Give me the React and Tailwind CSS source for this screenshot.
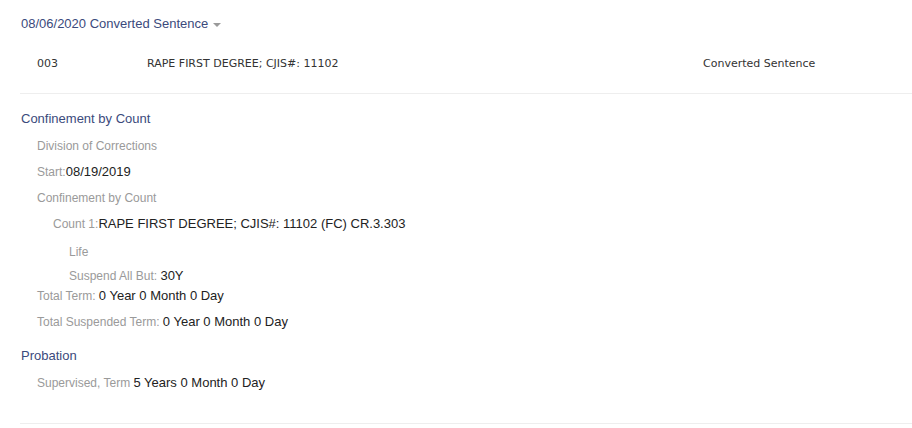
// Small label/value pair used throughout the sentence details.
function Field({ label, value, indent = "pl-[17px]", height = "h-[26px] leading-[25px]" }) {
  return (
    <div className={`${height} ${indent} whitespace-pre`}>
      <span className="text-[12px] text-[#9a9a9a]">{label}</span>
      {value && <span className="text-[13px] text-[#222]">{value}</span>}
    </div>
  );
}

export default function App() {
  return (
    <div className="min-h-screen w-full bg-white font-['Liberation_Sans',Arial,sans-serif]">
      <div className="ml-[20px]">
        {/* Sentence header */}
        <div className="flex h-[48px] items-center pl-[1px]">
          <span className="text-[13px] text-[#3b4a7c]">
            08/06/2020 Converted Sentence
          </span>
          <span className="ml-[5px] mt-[1px] h-0 w-0 border-x-[4px] border-t-[4px] border-x-transparent border-t-[#9a9a9a]" />
        </div>

        {/* Count row */}
        <div className="h-[46px] border-b border-[#eeeeee]">
          <div className="flex h-[32px] items-center font-['DejaVu_Sans',Verdana,sans-serif] text-[11px] text-[#333]">
            <span className="w-[127px] pl-[17px]">003</span>
            <span className="w-[556px]">RAPE FIRST DEGREE; CJIS#: 11102</span>
            <span>Converted Sentence</span>
          </div>
        </div>

        {/* Confinement */}
        <div className="mt-[11px]">
          <div className="h-[27px] pl-[1px] text-[13px] leading-[27px] text-[#3b4a7c]">
            Confinement by Count
          </div>
          <Field label="Division of Corrections" />
          <Field label="Start:" value="08/19/2019" />
          <Field label="Confinement by Count" />
          <Field
            label="Count 1:"
            value="RAPE FIRST DEGREE; CJIS#: 11102 (FC) CR.3.303"
            indent="pl-[33px]"
            height="h-[28px] leading-[26px]"
          />
          <Field label="Life" indent="pl-[49px]" height="h-[26px] leading-[26px]" />
          <Field
            label="Suspend All But: "
            value="30Y"
            indent="pl-[49px]"
            height="h-[22px] leading-[22px]"
          />
          <Field
            label="Total Term: "
            value="0 Year 0 Month 0 Day"
            height="h-[20px] leading-[18px]"
          />
          <Field
            label="Total Suspended Term: "
            value="0 Year 0 Month 0 Day"
            height="h-[30px] leading-[30px]"
          />
        </div>

        {/* Probation */}
        <div className="mt-[7px] h-[81px] border-b border-[#eeeeee]">
          <div className="h-[26px] pl-[1px] text-[13px] leading-[26px] text-[#3b4a7c]">
            Probation
          </div>
          <Field label="Supervised, Term " value="5 Years 0 Month 0 Day" />
        </div>
      </div>
    </div>
  );
}
